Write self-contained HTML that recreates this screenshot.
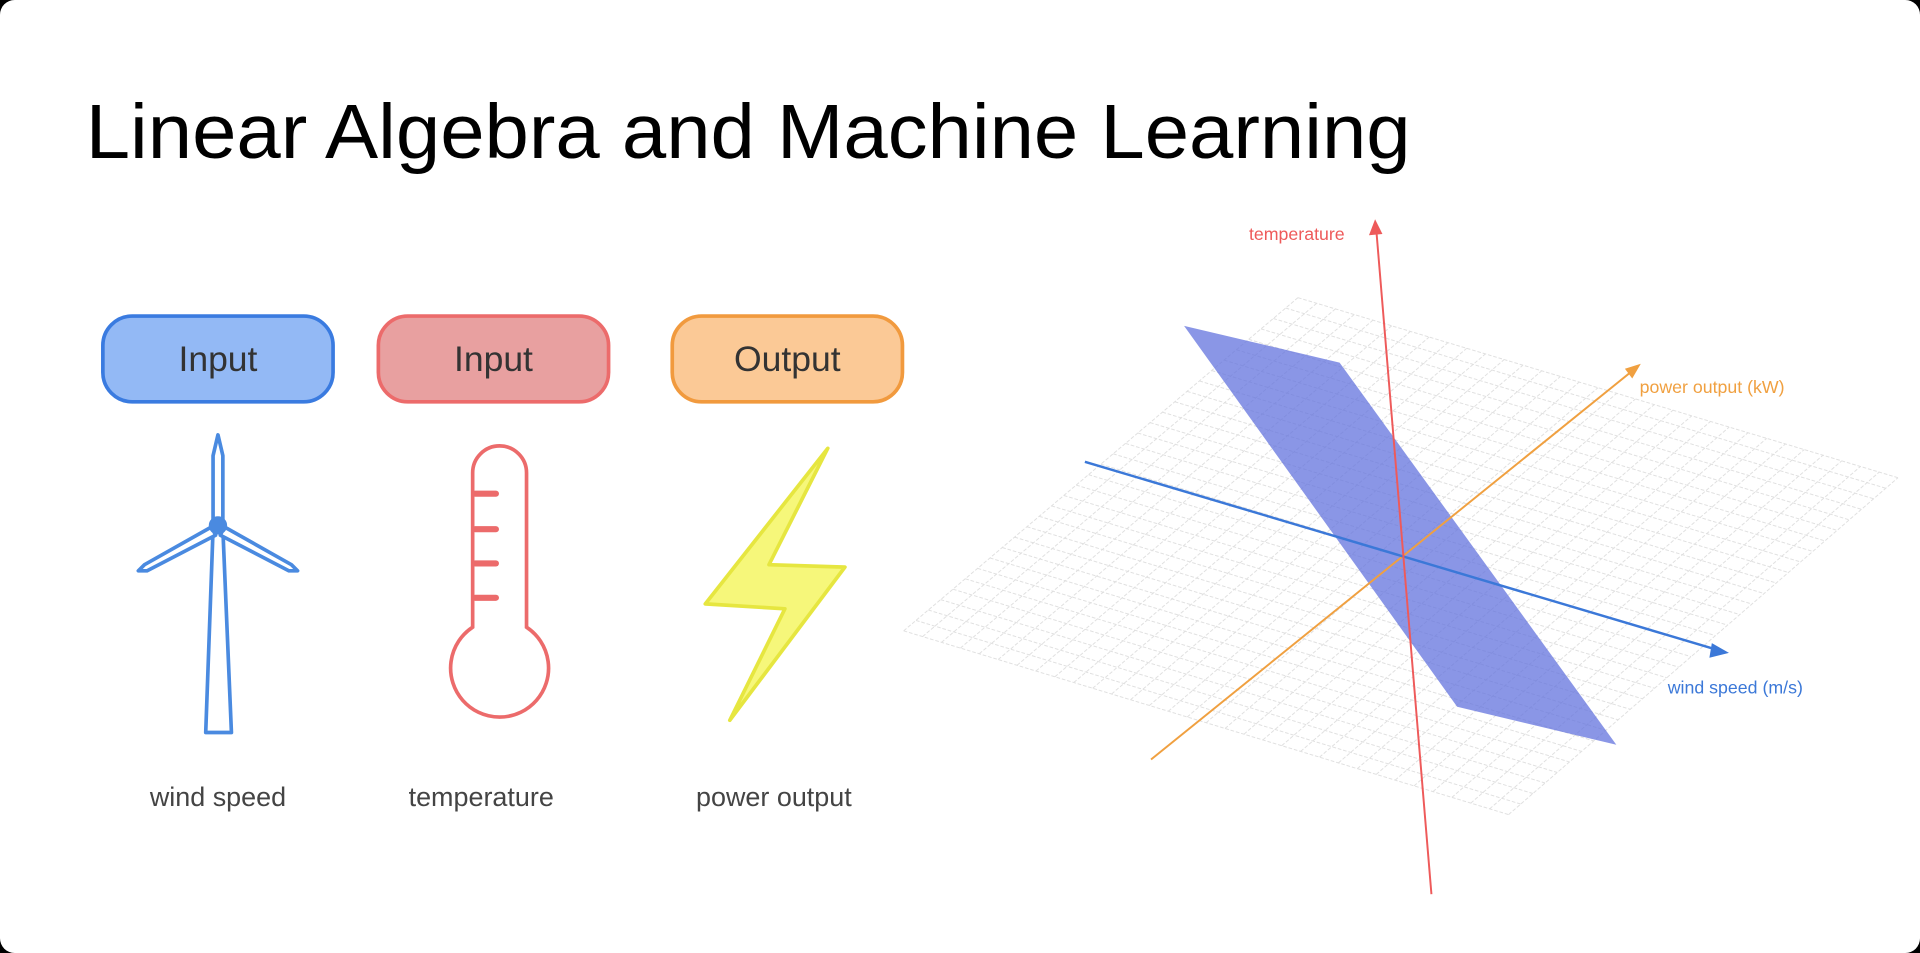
<!DOCTYPE html>
<html><head><meta charset="utf-8">
<style>
html,body{margin:0;padding:0;background:#000;width:1920px;height:953px;overflow:hidden}
svg{display:block}
text{font-family:"Liberation Sans",Arial,sans-serif}
</style></head>
<body>
<svg id="s" width="1920" height="953" viewBox="0 0 1568 778" preserveAspectRatio="none" xmlns="http://www.w3.org/2000/svg">
<rect x="0" y="0" width="1568" height="778" rx="12" fill="#fff"/>
<text x="70" y="129" font-size="63" fill="#000" textLength="1082" lengthAdjust="spacingAndGlyphs">Linear Algebra and Machine Learning</text>

<!-- pills -->
<rect x="84" y="258" width="188" height="70" rx="24" fill="#93b9f5" stroke="#3a7be0" stroke-width="3"/>
<text x="178" y="303" font-size="29" fill="#333" text-anchor="middle">Input</text>
<rect x="309" y="258" width="188" height="70" rx="24" fill="#e8a0a0" stroke="#ec6b6b" stroke-width="3"/>
<text x="403" y="303" font-size="29" fill="#333" text-anchor="middle">Input</text>
<rect x="549" y="258" width="188" height="70" rx="24" fill="#fbc996" stroke="#f19a3e" stroke-width="3"/>
<text x="643" y="303" font-size="29" fill="#333" text-anchor="middle">Output</text>

<!-- turbine -->
<g fill="#fff" stroke="#4a8ae0" stroke-width="3" stroke-linejoin="round">
<path d="M168,598 L174,432 L182,432 L189,598 Z"/>
<path d="M178,355 L182,372 L182,424 L174,424 L174,372 Z"/>
<path d="M173,430 L118,461 L113,466 L120,466 L176,437 Z"/>
<path d="M183,430 L238,461 L243,466 L236,466 L180,437 Z"/>
<circle cx="178" cy="429" r="6" fill="#4a8ae0"/>
</g>

<!-- thermometer -->
<path d="M386,386 A22,22 0 0 1 430,386 L430,512 A40,40 0 1 1 386,512 Z" fill="#fff" stroke="#ec6b6b" stroke-width="3"/>
<g stroke="#ec6b6b" stroke-width="5" stroke-linecap="round" fill="none">
<line x1="388" y1="403" x2="405" y2="403"/>
<line x1="388" y1="432" x2="405" y2="432"/>
<line x1="388" y1="460" x2="405" y2="460"/>
<line x1="388" y1="488" x2="405" y2="488"/>
</g>

<!-- bolt -->
<path d="M676,366 L576,493 L641,497 L596,588 L690,463 L628,461 Z" fill="#f6f77a" stroke="#e6e640" stroke-width="3" stroke-linejoin="round"/>

<text x="178" y="658" font-size="22" fill="#444" text-anchor="middle">wind speed</text>
<text x="393" y="658" font-size="22" fill="#444" text-anchor="middle">temperature</text>
<text x="632" y="658" font-size="22" fill="#444" text-anchor="middle">power output</text>

<!-- grid -->
<g id="grid" stroke="#e0e0e0" stroke-width="0.8" stroke-dasharray="3,1.5"></g>

<!-- plane -->
<polygon points="967,266 1094,296 1320,608 1190,577" fill="#6373dd" fill-opacity="0.75"/>

<!-- axes -->
<line x1="940" y1="620" x2="1334" y2="302" stroke="#f0a040" stroke-width="1.6"/>
<polygon points="1340,297 1327,301 1333,309" fill="#f0a040"/>
<line x1="886" y1="377" x2="1404" y2="531" stroke="#3b78d8" stroke-width="2"/>
<polygon points="1412,533 1398,525 1396,537" fill="#3b78d8"/>
<line x1="1169" y1="730" x2="1124" y2="188" stroke="#ee5a5a" stroke-width="1.6"/>
<polygon points="1123,179 1118,192 1129,191" fill="#ee5a5a"/>

<text x="1020" y="196" font-size="14.5" fill="#ee5a5a">temperature</text>
<text x="1339" y="321" font-size="14.5" fill="#f0a040">power output (kW)</text>
<text x="1362" y="566" font-size="14.5" fill="#3b78d8">wind speed (m/s)</text>
</svg>
<script>
var g=document.getElementById('grid');
var P0=[738,515],P1=[1060,243],P2=[1550,390],P3=[1232,665];
function L(a,b,t){return [a[0]+(b[0]-a[0])*t,a[1]+(b[1]-a[1])*t];}
var n=32,s='';
for(var i=0;i<=n;i++){var t=i/n;
var a=L(P0,P1,t),b=L(P3,P2,t);
s+='<line x1="'+a[0]+'" y1="'+a[1]+'" x2="'+b[0]+'" y2="'+b[1]+'"/>';
var c=L(P0,P3,t),d=L(P1,P2,t);
s+='<line x1="'+c[0]+'" y1="'+c[1]+'" x2="'+d[0]+'" y2="'+d[1]+'"/>';}
g.innerHTML=s;
</script>
</body></html>
